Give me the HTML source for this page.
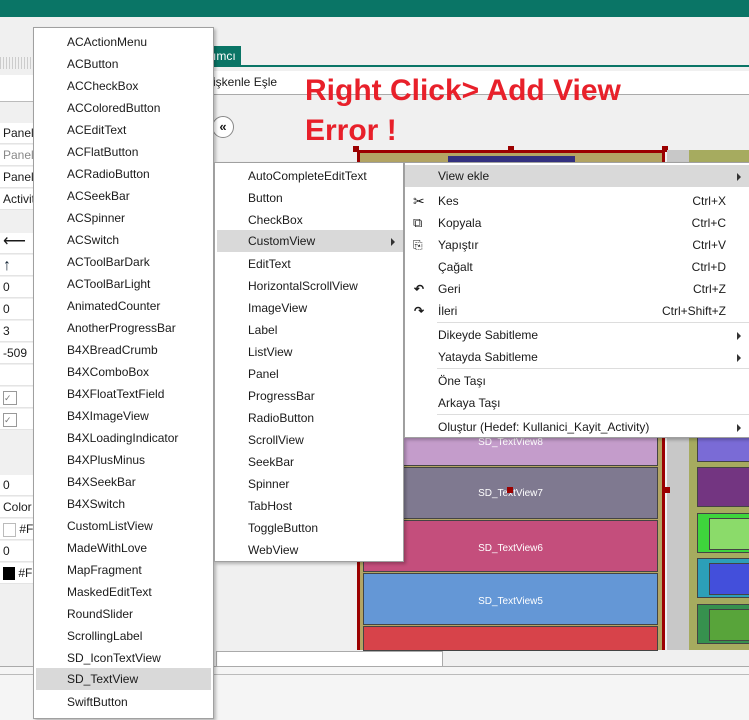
<!DOCTYPE html><html><head><meta charset="utf-8"><style>
body{margin:0;width:749px;height:719px;background:#f0f0f0;position:relative;overflow:hidden;font-family:"Liberation Sans",sans-serif;font-size:12px;color:#1a1a1a}
.a{position:absolute}
.menu{position:absolute;background:#fff;border:1px solid #a0a0a0;box-shadow:2px 2px 3px rgba(0,0,0,.25)}
.it{position:absolute;left:0;right:0;height:22px;line-height:22px}
.hl{background:#d9d9d9}
.sc{position:absolute;right:23px;top:0}
.ar{position:absolute;right:8px;top:8px;width:0;height:0;border-left:4px solid #333;border-top:4px solid transparent;border-bottom:4px solid transparent}
.sep{position:absolute;left:32px;right:0;height:1px;background:#ddd}
.p{position:absolute;left:363px;width:295px;color:#fff;font-size:10px;text-align:center;border:1px solid #444;box-sizing:border-box}
.lr{position:absolute;left:0;width:33px;height:21px;line-height:21px;background:#fff;border-bottom:1px solid #e4e4e4;padding-left:3px;box-sizing:border-box;overflow:hidden;white-space:nowrap}
</style></head><body>
<div class="a" style="left:0;top:0;width:749px;height:17px;background:#0a7566"></div>
<div class="a" style="left:0;top:57px;width:34px;height:12px;background:repeating-linear-gradient(90deg,#ccc 0 1px,#f0f0f0 1px 3px)"></div>
<div class="a" style="left:0;top:75px;width:34px;height:26px;background:#fff;border-bottom:1px solid #bbb"></div>
<div class="lr" style="top:123px">Panel2</div>
<div class="lr" style="top:145px;color:#888">Panel</div>
<div class="lr" style="top:167px">Panel2</div>
<div class="lr" style="top:189px">Activity</div>
<div class="lr" style="top:233px;font-size:16px;line-height:18px">⟵</div>
<div class="lr" style="top:255px;font-size:16px;font-weight:bold;color:#123">↑</div>
<div class="lr" style="top:277px">0</div>
<div class="lr" style="top:299px">0</div>
<div class="lr" style="top:321px">3</div>
<div class="lr" style="top:343px">-509</div>
<div class="lr" style="top:365px"></div>
<div class="lr" style="top:387px"><span style="display:inline-block;width:12px;height:12px;border:1px solid #999;vertical-align:middle;font-size:9px;line-height:12px;color:#777">✓</span></div>
<div class="lr" style="top:409px"><span style="display:inline-block;width:12px;height:12px;border:1px solid #999;vertical-align:middle;font-size:9px;line-height:12px;color:#777">✓</span></div>
<div class="lr" style="top:475px">0</div>
<div class="lr" style="top:497px">Color</div>
<div class="lr" style="top:519px"><span style="display:inline-block;width:11px;height:12px;border:1px solid #bbb;vertical-align:middle"></span> #F</div>
<div class="lr" style="top:541px">0</div>
<div class="lr" style="top:563px"><span style="display:inline-block;width:12px;height:13px;background:#000;vertical-align:middle"></span> #F</div>
<div class="a" style="left:213px;top:46px;width:28px;height:20px;background:#0a7566;color:#fff;font-size:12px;line-height:20px">ımcı</div>
<div class="a" style="left:213px;top:65px;width:536px;height:2px;background:#0a7566"></div>
<div class="a" style="left:213px;top:71px;width:536px;height:23px;background:#fff;border-bottom:1px solid #aaa;line-height:22px">işkenle Eşle</div>
<div class="a" style="left:212px;top:116px;width:20px;height:20px;border:1px solid #888;border-radius:50%;background:#fff;text-align:center;line-height:20px;font-weight:bold;font-size:13px">«</div>
<div class="a" style="left:305px;top:71px;color:#e8202a;font-weight:bold;font-size:30px;line-height:40px">Right Click&gt; Add View<br>Error !</div>
<div class="a" style="left:357px;top:150px;width:308px;height:500px;background:#b3a564;border-left:3px solid #9b0000;border-right:3px solid #9b0000;border-top:3px solid #9b0000;box-sizing:border-box"></div>
<div class="a" style="left:353px;top:146px;width:6px;height:6px;background:#9b0000"></div>
<div class="a" style="left:508px;top:146px;width:6px;height:6px;background:#9b0000"></div>
<div class="a" style="left:662px;top:146px;width:6px;height:6px;background:#9b0000"></div>
<div class="a" style="left:448px;top:156px;width:127px;height:10px;background:#33307f"></div>
<div class="a" style="left:667px;top:150px;width:22px;height:500px;background:#c8c8c8"></div>
<div class="a" style="left:689px;top:150px;width:60px;height:500px;background:#a6ab5f"></div>
<div class="p" style="top:436px;height:30px;background:#c49ccb">SD_TextView8</div>
<div class="p" style="top:467px;height:52px;background:#7f7990;line-height:52px">SD_TextView7</div>
<div class="p" style="top:520px;height:52px;background:#c44e7c;line-height:55px">SD_TextView6</div>
<div class="p" style="top:573px;height:52px;background:#6497d6;line-height:55px">SD_TextView5</div>
<div class="p" style="top:626px;height:25px;background:#d7434a"></div>
<div class="a" style="left:507px;top:487px;width:6px;height:6px;background:#9b0000"></div>
<div class="a" style="left:665px;top:487px;width:5px;height:6px;background:#9b0000"></div>
<div class="a" style="left:697px;top:436px;width:52px;height:24px;background:#7a6bd6;border:1px solid #444"></div>
<div class="a" style="left:697px;top:467px;width:52px;height:38px;background:#733581;border:1px solid #444"></div>
<div class="a" style="left:697px;top:513px;width:52px;height:38px;background:#3ed53c;border:1px solid #444"></div>
<div class="a" style="left:709px;top:518px;width:40px;height:30px;background:#8bdb6a;border:1px solid #444"></div>
<div class="a" style="left:697px;top:558px;width:52px;height:38px;background:#2c9fb8;border:1px solid #444"></div>
<div class="a" style="left:709px;top:563px;width:40px;height:30px;background:#434fdb;border:1px solid #444"></div>
<div class="a" style="left:697px;top:604px;width:52px;height:38px;background:#36914e;border:1px solid #444"></div>
<div class="a" style="left:709px;top:609px;width:40px;height:30px;background:#58a43a;border:1px solid #444"></div>
<div class="a" style="left:216px;top:651px;width:225px;height:14px;background:#fff;border:1px solid #aaa"></div>
<div class="a" style="left:0;top:666px;width:749px;height:53px;background:#f5f5f5;border-top:1px solid #aaa"></div>
<div class="a" style="left:0;top:674px;width:749px;height:1px;background:#bbb"></div>

<div class="menu" style="left:33px;top:27px;width:179px;height:690px"></div>
<div class="a" style="left:34px;top:31px;width:179px">
<div class="it" style="top:0"><span style="margin-left:33px">ACActionMenu</span></div>
<div class="it" style="top:22px"><span style="margin-left:33px">ACButton</span></div>
<div class="it" style="top:44px"><span style="margin-left:33px">ACCheckBox</span></div>
<div class="it" style="top:66px"><span style="margin-left:33px">ACColoredButton</span></div>
<div class="it" style="top:88px"><span style="margin-left:33px">ACEditText</span></div>
<div class="it" style="top:110px"><span style="margin-left:33px">ACFlatButton</span></div>
<div class="it" style="top:132px"><span style="margin-left:33px">ACRadioButton</span></div>
<div class="it" style="top:154px"><span style="margin-left:33px">ACSeekBar</span></div>
<div class="it" style="top:176px"><span style="margin-left:33px">ACSpinner</span></div>
<div class="it" style="top:198px"><span style="margin-left:33px">ACSwitch</span></div>
<div class="it" style="top:220px"><span style="margin-left:33px">ACToolBarDark</span></div>
<div class="it" style="top:242px"><span style="margin-left:33px">ACToolBarLight</span></div>
<div class="it" style="top:264px"><span style="margin-left:33px">AnimatedCounter</span></div>
<div class="it" style="top:286px"><span style="margin-left:33px">AnotherProgressBar</span></div>
<div class="it" style="top:308px"><span style="margin-left:33px">B4XBreadCrumb</span></div>
<div class="it" style="top:330px"><span style="margin-left:33px">B4XComboBox</span></div>
<div class="it" style="top:352px"><span style="margin-left:33px">B4XFloatTextField</span></div>
<div class="it" style="top:374px"><span style="margin-left:33px">B4XImageView</span></div>
<div class="it" style="top:396px"><span style="margin-left:33px">B4XLoadingIndicator</span></div>
<div class="it" style="top:418px"><span style="margin-left:33px">B4XPlusMinus</span></div>
<div class="it" style="top:440px"><span style="margin-left:33px">B4XSeekBar</span></div>
<div class="it" style="top:462px"><span style="margin-left:33px">B4XSwitch</span></div>
<div class="it" style="top:484px"><span style="margin-left:33px">CustomListView</span></div>
<div class="it" style="top:506px"><span style="margin-left:33px">MadeWithLove</span></div>
<div class="it" style="top:528px"><span style="margin-left:33px">MapFragment</span></div>
<div class="it" style="top:550px"><span style="margin-left:33px">MaskedEditText</span></div>
<div class="it" style="top:572px"><span style="margin-left:33px">RoundSlider</span></div>
<div class="it" style="top:594px"><span style="margin-left:33px">ScrollingLabel</span></div>
<div class="it" style="top:616px"><span style="margin-left:33px">SD_IconTextView</span></div>
<div class="it hl" style="top:637px;left:2px;right:2px"><span style="margin-left:31px">SD_TextView</span></div>
<div class="it" style="top:660px"><span style="margin-left:33px">SwiftButton</span></div>
</div>

<div class="menu" style="left:214px;top:162px;width:188px;height:398px"></div>
<div class="a" style="left:215px;top:165px;width:188px">
<div class="it" style="top:0"><span style="margin-left:33px">AutoCompleteEditText</span></div>
<div class="it" style="top:22px"><span style="margin-left:33px">Button</span></div>
<div class="it" style="top:44px"><span style="margin-left:33px">CheckBox</span></div>
<div class="it hl" style="top:65px;left:2px;right:0"><span style="margin-left:31px">CustomView</span><div class="ar"></div></div>
<div class="it" style="top:88px"><span style="margin-left:33px">EditText</span></div>
<div class="it" style="top:110px"><span style="margin-left:33px">HorizontalScrollView</span></div>
<div class="it" style="top:132px"><span style="margin-left:33px">ImageView</span></div>
<div class="it" style="top:154px"><span style="margin-left:33px">Label</span></div>
<div class="it" style="top:176px"><span style="margin-left:33px">ListView</span></div>
<div class="it" style="top:198px"><span style="margin-left:33px">Panel</span></div>
<div class="it" style="top:220px"><span style="margin-left:33px">ProgressBar</span></div>
<div class="it" style="top:242px"><span style="margin-left:33px">RadioButton</span></div>
<div class="it" style="top:264px"><span style="margin-left:33px">ScrollView</span></div>
<div class="it" style="top:286px"><span style="margin-left:33px">SeekBar</span></div>
<div class="it" style="top:308px"><span style="margin-left:33px">Spinner</span></div>
<div class="it" style="top:330px"><span style="margin-left:33px">TabHost</span></div>
<div class="it" style="top:352px"><span style="margin-left:33px">ToggleButton</span></div>
<div class="it" style="top:374px"><span style="margin-left:33px">WebView</span></div>
</div>

<div class="menu" style="left:404px;top:162px;width:348px;height:274px"></div>
<div class="a" style="left:405px;top:165px;width:344px">
<div class="it hl" style="top:0"><span style="margin-left:33px">View ekle</span><div class="ar"></div></div>
<div class="it" style="top:25px"><span class="a" style="left:8px;font-size:14px">✂</span><span style="margin-left:33px">Kes</span><span class="sc">Ctrl+X</span></div>
<div class="it" style="top:47px"><span class="a" style="left:8px;font-size:13px">⧉</span><span style="margin-left:33px">Kopyala</span><span class="sc">Ctrl+C</span></div>
<div class="it" style="top:69px"><span class="a" style="left:8px;font-size:12px">⎘</span><span style="margin-left:33px">Yapıştır</span><span class="sc">Ctrl+V</span></div>
<div class="it" style="top:91px"><span style="margin-left:33px">Çağalt</span><span class="sc">Ctrl+D</span></div>
<div class="it" style="top:113px"><span class="a" style="left:9px;font-weight:bold">↶</span><span style="margin-left:33px">Geri</span><span class="sc">Ctrl+Z</span></div>
<div class="it" style="top:135px"><span class="a" style="left:9px;font-weight:bold">↷</span><span style="margin-left:33px">İleri</span><span class="sc">Ctrl+Shift+Z</span></div>
<div class="sep" style="top:157px"></div>
<div class="it" style="top:159px"><span style="margin-left:33px">Dikeyde Sabitleme</span><div class="ar"></div></div>
<div class="it" style="top:181px"><span style="margin-left:33px">Yatayda Sabitleme</span><div class="ar"></div></div>
<div class="sep" style="top:203px"></div>
<div class="it" style="top:205px"><span style="margin-left:33px">Öne Taşı</span></div>
<div class="it" style="top:227px"><span style="margin-left:33px">Arkaya Taşı</span></div>
<div class="sep" style="top:249px"></div>
<div class="it" style="top:251px"><span style="margin-left:33px">Oluştur (Hedef: Kullanici_Kayit_Activity)</span><div class="ar"></div></div>
</div>
</body></html>
